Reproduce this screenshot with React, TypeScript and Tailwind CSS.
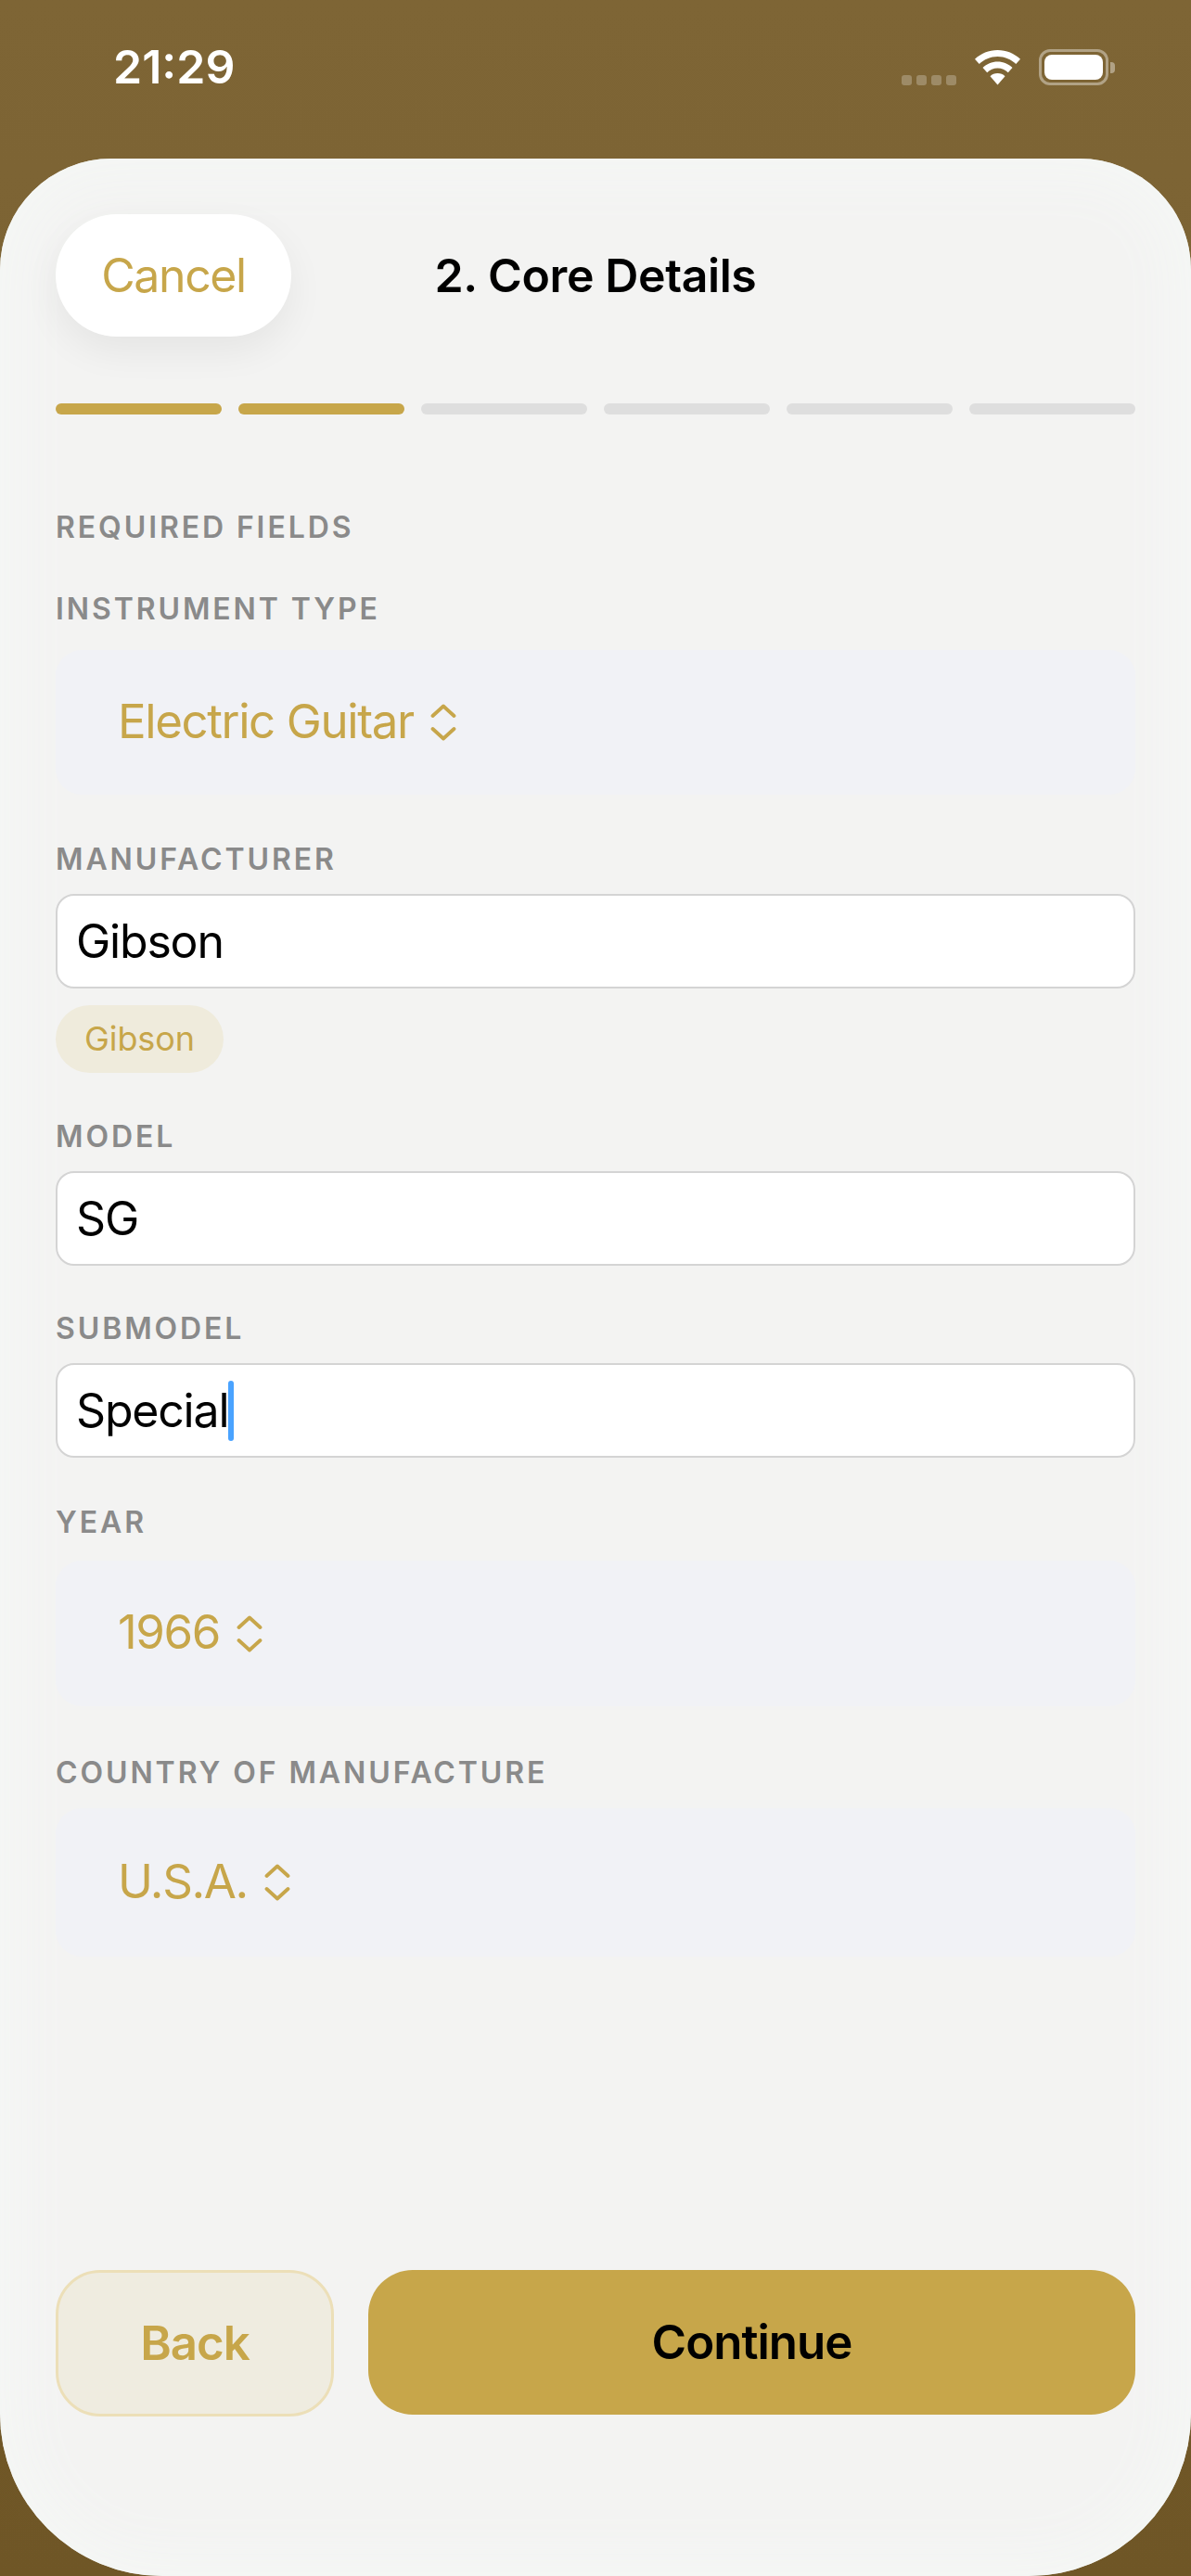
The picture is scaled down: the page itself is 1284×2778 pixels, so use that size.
import React from 'react';

const fieldLabel = "text-[32px] leading-[38px] font-semibold tracking-[2.9px] text-[#8a8a8a]";

const Chevrons: React.FC = () => (
  <svg width="28" height="40" viewBox="0 0 28 40" fill="none" stroke="#c7a64a" strokeWidth="3.8" strokeLinecap="round" strokeLinejoin="round">
    <path d="M2.5 13 L14 2.5 L25.5 13" />
    <path d="M2.5 27 L14 37.5 L25.5 27" />
  </svg>
);

const Picker: React.FC<{ value: string; className?: string }> = ({ value, className }) => (
  <div className={"flex items-center gap-[18px] bg-[#f1f2f6] rounded-[28px] pl-[67px] text-[51px] text-[#c7a64a] tracking-[-1.4px] " + (className ?? '')}>
    <span className="-translate-y-[1px]">{value}</span>
    <Chevrons />
  </div>
);

const TextBox: React.FC<{ value: string; caret?: boolean }> = ({ value, caret }) => (
  <div className="flex items-center h-[102px] bg-white border-2 border-[#d4d4d4] rounded-[20px] pl-[20px] text-[50px] text-black tracking-[-1.2px]">
    <span>{value}</span>
    {caret && <span className="w-[6px] h-[65px] rounded-[3px] bg-[#4aa3ff]" />}
  </div>
);

const App: React.FC = () => {
  const steps = [true, true, false, false, false, false];

  return (
    <div className="w-[1284px] h-[2778px] flex flex-col overflow-hidden bg-gradient-to-b from-[#7e6535] to-[#6f5626]" style={{ fontFamily: 'Inter, "Liberation Sans", sans-serif' }}>
      {/* status bar */}
      <div className="h-[171px] shrink-0 flex items-start justify-between pt-[46px] pl-[122px] pr-[82px] text-white">
        <span className="text-[50px] leading-[52px] font-semibold">21:29</span>
        <div className="flex items-end gap-[19px] mt-[7px]">
          <div className="flex gap-[5px]">
            {[0, 1, 2, 3].map(i => (
              <span key={i} className="w-[11px] h-[11px] rounded-[3px] bg-white/25" />
            ))}
          </div>
          <svg width="51" height="38" viewBox="0 0 50 38" fill="white">
            <path d="M25 0C34.5 0 43 3.6 49.5 9.8L44.8 15C39.6 10 32.6 7 25 7S10.4 10 5.2 15L0.5 9.8C7 3.6 15.5 0 25 0Z" />
            <path d="M25 12.5C31.2 12.5 36.8 14.9 41 19L36.3 24.2C33.3 21.3 29.4 19.6 25 19.6S16.7 21.3 13.7 24.2L9 19C13.2 14.9 18.8 12.5 25 12.5Z" />
            <path d="M25 25C28.2 25 31 26.2 33 28.2L25 37.5L17 28.2C19 26.2 21.8 25 25 25Z" />
          </svg>
          <div className="flex items-center gap-[2px]">
            <div className="w-[75px] h-[39px] rounded-[12px] border-[3px] border-white/40 p-[3px]">
              <div className="w-full h-full rounded-[8px] bg-white" />
            </div>
            <span className="w-[5px] h-[12px] rounded-r-[4px] bg-white/40" />
          </div>
        </div>
      </div>

      {/* sheet */}
      <div className="flex-1 flex flex-col bg-[#f3f3f2] shadow-[inset_0_0_60px_20px_#f5f7f5] rounded-t-[120px] rounded-b-[175px] px-[60px] pt-[60px]">
        <div className="relative flex items-center justify-center h-[132px]">
          <button className="absolute left-0 top-0 w-[254px] h-[132px] rounded-[66px] bg-white text-[50px] text-[#c7a64a] tracking-[-1.4px] shadow-[0_16px_40px_rgba(0,0,0,0.06)]">
            Cancel
          </button>
          <h1 className="text-[50px] font-semibold text-black tracking-[-0.4px]">2. Core Details</h1>
        </div>

        <div className="flex gap-[18px] mt-[72px]">
          {steps.map((done, i) => (
            <div key={i} className={"flex-1 h-[12px] rounded-[6px] " + (done ? 'bg-[#c7a64a]' : 'bg-[#dedede]')} />
          ))}
        </div>

        <p className={fieldLabel + " mt-[103px]"}>REQUIRED FIELDS</p>
        <p className={fieldLabel + " mt-[50px]"}>INSTRUMENT TYPE</p>
        <Picker value="Electric Guitar" className="h-[156px] mt-[25px]" />

        <p className={fieldLabel + " mt-[51px]"}>MANUFACTURER</p>
        <div className="mt-[18px]">
          <TextBox value="Gibson" />
        </div>
        <span className="self-start flex items-center h-[73px] mt-[18px] px-[31px] rounded-[37px] bg-[#efebdc] text-[36px] tracking-[-0.1px] text-[#c7a64a] pb-[2px]">Gibson</span>

        <p className={fieldLabel + " mt-[50px]"}>MODEL</p>
        <div className="mt-[18px]">
          <TextBox value="SG" />
        </div>

        <p className={fieldLabel + " mt-[49px]"}>SUBMODEL</p>
        <div className="mt-[18px]">
          <TextBox value="Special" caret />
        </div>

        <p className={fieldLabel + " mt-[51px]"}>YEAR</p>
        <Picker value="1966" className="h-[157px] mt-[22px]" />

        <p className={fieldLabel + " mt-[53px]"}>COUNTRY OF MANUFACTURE</p>
        <Picker value="U.S.A." className="h-[160px] mt-[19px]" />

        <div className="flex gap-[37px] mt-[338px]">
          <button className="w-[300px] h-[158px] rounded-[48px] bg-[#efece0] border-[3px] border-[#ecdfb8] text-[51px] font-semibold text-[#c7a64a] tracking-[-1px]">
            Back
          </button>
          <button className="flex-1 h-[156px] rounded-[48px] bg-[#c7a64a] text-[51px] font-semibold text-black tracking-[-1px]">
            Continue
          </button>
        </div>
      </div>
    </div>
  );
};

export default App;
